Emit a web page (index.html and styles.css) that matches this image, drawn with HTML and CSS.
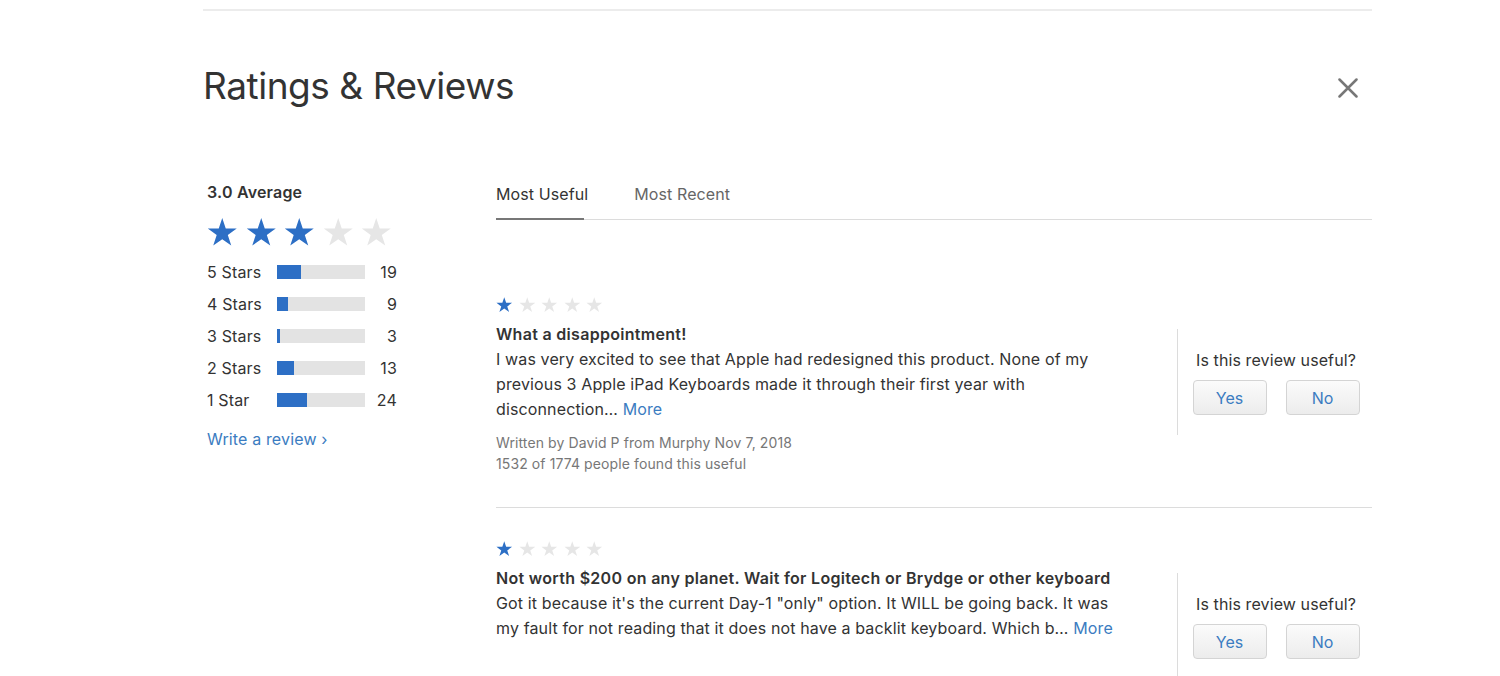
FILE: index.html
```html
<!DOCTYPE html>
<html lang="en">
<head>
<meta charset="utf-8">
<title>Ratings &amp; Reviews</title>
<link rel="stylesheet" href="styles.css">
</head>
<body>
<svg width="0" height="0" class="defs" aria-hidden="true">
  <defs>
    <symbol id="star" viewBox="0 0 20 19">
      <polygon points="10,0 12.3,6.9 19.5,6.9 13.65,11.2 15.9,18.1 10,13.85 4.1,18.1 6.35,11.2 0.5,6.9 7.7,6.9"/>
    </symbol>
  </defs>
</svg>
<div class="page">
  <div class="topline"></div>
  <header class="header">
    <h1 class="title">Ratings &amp; Reviews</h1>
    <button class="close" aria-label="Close">
      <svg viewBox="0 0 20 20" width="20" height="20"><path d="M1.5 1.5 L18.5 18.5 M18.5 1.5 L1.5 18.5" stroke="#777" stroke-width="2.5" stroke-linecap="round" fill="none"/></svg>
    </button>
  </header>

  <main class="main">
    <aside class="summary">
      <div class="avg">3.0 Average</div>
      <div class="big-stars">
        <svg class="bstar on"><use href="#star"/></svg>
        <svg class="bstar on"><use href="#star"/></svg>
        <svg class="bstar on"><use href="#star"/></svg>
        <svg class="bstar"><use href="#star"/></svg>
        <svg class="bstar"><use href="#star"/></svg>
      </div>
      <div class="hist">
        <div class="hrow"><span class="hlabel">5 Stars</span><span class="bar"><span class="fill" style="width:24px"></span></span><span class="count">19</span></div>
        <div class="hrow"><span class="hlabel">4 Stars</span><span class="bar"><span class="fill" style="width:11px"></span></span><span class="count">9</span></div>
        <div class="hrow"><span class="hlabel">3 Stars</span><span class="bar"><span class="fill" style="width:3px"></span></span><span class="count">3</span></div>
        <div class="hrow"><span class="hlabel">2 Stars</span><span class="bar"><span class="fill" style="width:17px"></span></span><span class="count">13</span></div>
        <div class="hrow"><span class="hlabel">1 Star</span><span class="bar"><span class="fill" style="width:30px"></span></span><span class="count">24</span></div>
      </div>
      <a class="write" href="#">Write a review ›</a>
    </aside>

    <section class="reviews">
      <nav class="tabs">
        <span class="tab active">Most Useful</span>
        <span class="tab">Most Recent</span>
      </nav>

      <article class="review first">
        <div class="sstars">
          <svg class="sstar on"><use href="#star"/></svg>
          <svg class="sstar"><use href="#star"/></svg>
          <svg class="sstar"><use href="#star"/></svg>
          <svg class="sstar"><use href="#star"/></svg>
          <svg class="sstar"><use href="#star"/></svg>
        </div>
        <div class="rbody">
          <div class="rtext">
            <h3 class="rtitle">What a disappointment!</h3>
            <p class="rcontent"><span>I was very excited to see that Apple had redesigned this product. None of my previous 3 Apple iPad Keyboards made it through their first year with disconnection…</span> <a href="#" class="more">More</a></p>
            <p class="meta"><span class="mline">Written by David P from Murphy Nov 7, 2018</span><span class="mline">1532 of 1774 people found this useful</span></p>
          </div>
          <div class="useful">
            <div class="uq">Is this review useful?</div>
            <div class="btns"><button class="btn">Yes</button><button class="btn">No</button></div>
          </div>
        </div>
      </article>

      <article class="review second">
        <div class="sstars">
          <svg class="sstar on"><use href="#star"/></svg>
          <svg class="sstar"><use href="#star"/></svg>
          <svg class="sstar"><use href="#star"/></svg>
          <svg class="sstar"><use href="#star"/></svg>
          <svg class="sstar"><use href="#star"/></svg>
        </div>
        <div class="rbody">
          <div class="rtext">
            <h3 class="rtitle">Not worth $200 on any planet. Wait for Logitech or Brydge or other keyboard</h3>
            <p class="rcontent"><span>Got it because it's the current Day-1 "only" option. It WILL be going back. It was my fault for not reading that it does not have a backlit keyboard. Which b…</span> <a href="#" class="more">More</a></p>
          </div>
          <div class="useful">
            <div class="uq">Is this review useful?</div>
            <div class="btns"><button class="btn">Yes</button><button class="btn">No</button></div>
          </div>
        </div>
      </article>
    </section>
  </main>
</div>
</body>
</html>
```

FILE: styles.css
```css
* { box-sizing: border-box; }
html, body { margin: 0; padding: 0; background: #fff; }
body {
  font-family: Inter, "Noto Sans", sans-serif;
  color: #333;
  overflow: hidden;
  height: 676px;
}
.defs { position: absolute; }
.page {
  width: 1169px;
  margin-left: 203px;
  padding-top: 9px;
}
.topline { height: 2px; background: #ececec; }

.header {
  display: flex;
  align-items: center;
  justify-content: space-between;
  margin-top: 52px;
  height: 46px;
}
.title {
  margin: 0;
  font-size: 37px;
  font-weight: 400;
  line-height: 46px;
  letter-spacing: -0.45px;
  color: #333;
}
.close {
  border: 0;
  background: none;
  padding: 0;
  margin-right: 14px;
  margin-top: 4px;
  width: 20px;
  height: 20px;
}
.close svg { display: block; }

.main {
  display: flex;
  margin-top: 71px;
}
.summary {
  width: 293px;
  padding-left: 4px;
  flex: none;
}
.avg {
  font-size: 16px;
  font-weight: 600;
  line-height: 24px;
  letter-spacing: 0.2px;
}
.big-stars {
  display: flex;
  gap: 8px;
  margin-top: 12px;
  height: 32px;
  align-items: center;
}
.bstar { width: 30.5px; height: 29px; fill: #e6e6e6; }
.bstar.on { fill: #2d6fc5; }

.hist { margin-top: 8px; }
.hrow {
  display: flex;
  align-items: center;
  height: 32px;
  font-size: 16px;
  letter-spacing: 0.15px;
}
.hlabel { width: 70px; }
.bar {
  width: 88px;
  height: 14px;
  background: #e3e3e3;
  display: block;
}
.fill { display: block; height: 100%; background: #2d6fc5; }
.count { width: 32px; text-align: right; }

.write {
  display: block;
  margin-top: 11px;
  line-height: 24px;
  font-size: 16px;
  letter-spacing: 0.15px;
  color: #3b7cc1;
  text-decoration: none;
}

.reviews { flex: 1; }
.tabs {
  display: flex;
  gap: 46px;
  border-bottom: 1px solid #dcdcdc;
  padding-top: 2px;
}
.tab {
  font-size: 16px;
  line-height: 24px;
  padding-bottom: 13px;
  color: #666;
  letter-spacing: 0.1px;
  position: relative;
}
.tab.active { color: #333; }
.tab.active::after {
  content: "";
  position: absolute;
  left: 0;
  right: 4px;
  bottom: -1px;
  height: 2px;
  background: #777;
}

.review { padding-top: 32px; }
.review.first { margin-top: 44px; padding-bottom: 33px; border-bottom: 1px solid #dcdcdc; }
.sstars { display: flex; gap: 6px; height: 18px; align-items: center; }
.sstar { width: 16.5px; height: 16px; fill: #e6e6e6; }
.sstar.on { fill: #2d6fc5; }

.rbody { display: flex; margin-top: 8px; }
.rtext { flex: 1; }
.rtitle {
  margin: 0;
  font-size: 16px;
  font-weight: 600;
  line-height: 25px;
  letter-spacing: 0.3px;
}
.rcontent {
  margin: 0;
  font-size: 16px;
  line-height: 25px;
  letter-spacing: 0.13px;
  width: 625px;
}
.more { color: #3b7cc1; text-decoration: none; }
.meta {
  margin: 10px 0 0;
  font-size: 14px;
  line-height: 21px;
  letter-spacing: 0.1px;
  color: #777;
}
.mline { display: block; }
.useful {
  width: 195px;
  flex: none;
  margin-top: 7px;
  align-self: flex-start;
  border-left: 1px solid #dcdcdc;
  padding: 20px 0 20px 2px;
  display: flex;
  flex-direction: column;
  align-items: center;
}
.uq { font-size: 16px; line-height: 22px; letter-spacing: 0.1px; }
.btns { display: flex; gap: 19px; margin-top: 9px; }
.btn {
  width: 74px;
  height: 35px;
  border: 1px solid #d4d4d4;
  border-radius: 4px;
  background: linear-gradient(#fbfbfb, #ececec);
  color: #3b7cc1;
  font-family: inherit;
  font-size: 16px;
  padding: 0;
}
```
